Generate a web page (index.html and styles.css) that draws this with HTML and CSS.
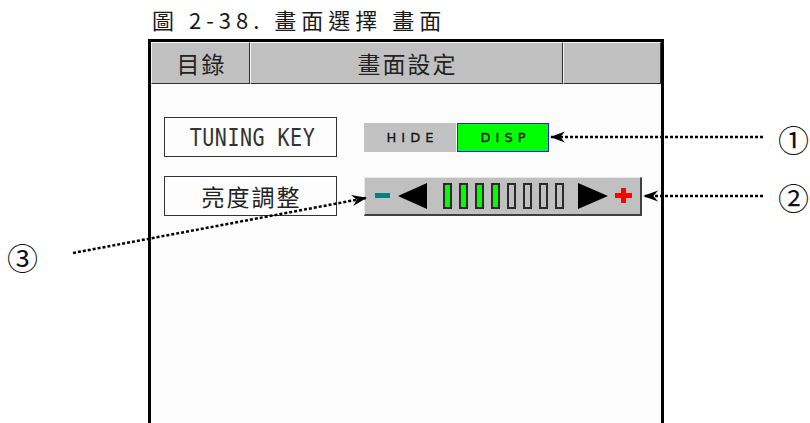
FILE: index.html
```html
<!DOCTYPE html>
<html lang="zh-Hant">
<head>
<meta charset="UTF-8">
<meta name="viewport" content="width=device-width, initial-scale=1.0">
<title>畫面選擇</title>
<link rel="stylesheet" href="styles.css">
</head>
<body>

<div class="page">
    <div class="caption">圖 2-38. 畫面選擇 畫面</div>

    <div class="screen">
        <div class="header">
            <div class="cell cell-menu">目錄</div>
            <div class="cell cell-title">畫面設定</div>
            <div class="cell cell-empty"></div>
        </div>

        <div class="content">
            <div class="row">
                <div class="label"><span class="latin">TUNING KEY</span></div>
                <div class="toggle">
                    <div class="opt">HIDE</div>
                    <div class="opt on">DISP</div>
                </div>
            </div>
            <div class="row">
                <div class="label">亮度調整</div>
                <div class="slider">
                    <span class="minus"></span>
                    <span class="tri tri-left"></span>
                    <div class="bars">
                        <span class="bar lit"></span>
                        <span class="bar lit"></span>
                        <span class="bar lit"></span>
                        <span class="bar lit"></span>
                        <span class="bar"></span>
                        <span class="bar"></span>
                        <span class="bar"></span>
                        <span class="bar"></span>
                    </div>
                    <span class="tri tri-right"></span>
                    <svg class="plus" width="17" height="15" viewBox="0 0 17 15">
                        <rect x="0" y="5" width="17" height="5" fill="#ff0000"/>
                        <rect x="6" y="0" width="5" height="15" fill="#ff0000"/>
                    </svg>
                </div>
            </div>
        </div>
    </div>

    <!-- callout lines drawn over the screen -->
    <svg class="callouts" width="810" height="423" viewBox="0 0 810 423">
        <defs>
            <marker id="head" markerUnits="userSpaceOnUse" viewBox="0 0 16 12"
                    refX="15" refY="6" markerWidth="15" markerHeight="13" orient="auto">
                <path d="M0,0 L16,6 L0,12 L5,6 Z" fill="#000"/>
            </marker>
        </defs>
        <line class="dots" x1="763" y1="137" x2="551" y2="137" marker-end="url(#head)"/>
        <line class="dots" x1="763" y1="196" x2="644" y2="196" marker-end="url(#head)"/>
        <line class="dots" x1="73" y1="253" x2="366" y2="198" marker-end="url(#head)"/>
    </svg>
    <span class="num num-1">①</span>
    <span class="num num-2">②</span>
    <span class="num num-3">③</span>
</div>

</body>
</html>
```

FILE: styles.css
```css
body {
    margin: 0;
    background: #fff;
    font-family: "Noto Sans CJK TC", "Noto Sans", sans-serif;
    color: #222;
}
.page {
    position: relative;
    width: 810px;
    height: 423px;
    overflow: hidden;
    padding-left: 148px;
    box-sizing: border-box;
}
.caption {
    height: 39px;
    line-height: 38px;
    padding-left: 4px;
    font-size: 22px;
    letter-spacing: 5px;
    color: #1a1a1a;
    white-space: nowrap;
}

/* device screen */
.screen {
    width: 516px;
    height: 420px;
    box-sizing: border-box;
    border: 3px solid #000;
    border-bottom: none;
    background: #fcfcfc;
}
.header {
    display: flex;
    height: 42px;
}
.cell {
    box-sizing: border-box;
    background: #c0c0c0;
    border: 1px solid;
    border-color: #f4f4f4 #303030 #303030 #f4f4f4;
    display: flex;
    align-items: center;
    justify-content: center;
    font-size: 23px;
    letter-spacing: 2px;
    padding-left: 2px;
}
.cell-menu { width: 99px; }
.cell-title { width: 313px; }
.cell-empty { width: 98px; }

.content {
    padding: 33px 0 0 13px;
    display: flex;
    flex-direction: column;
    gap: 19px;
}
.row {
    display: flex;
    align-items: center;
    gap: 27px;
}
.label {
    width: 173px;
    height: 40px;
    box-sizing: border-box;
    border: 1px solid #333;
    display: flex;
    align-items: center;
    justify-content: center;
    font-size: 23px;
    letter-spacing: 2px;
    padding-left: 2px;
    background: #fdfdfd;
}
.label .latin {
    display: inline-block;
    font-family: "DejaVu Sans Mono", monospace;
    font-size: 20px;
    letter-spacing: 0.5px;
    transform: scaleY(1.25);
    padding-left: 2px;
    color: #333;
}

/* HIDE / DISP switch */
.toggle {
    display: flex;
    height: 29px;
}
.opt {
    width: 92px;
    box-sizing: border-box;
    background: #c2c2c2;
    display: flex;
    align-items: center;
    justify-content: center;
    font-family: "DejaVu Sans", sans-serif;
    font-size: 13px;
    letter-spacing: 5px;
    padding-left: 5px;
    color: #111;
    -webkit-text-stroke: 0.3px #111;
}
.opt.on {
    width: 92px;
    margin-left: 1px;
    background: #00ff00;
    border: 1px solid #2020ff;
}

/* brightness slider */
.slider {
    width: 278px;
    height: 39px;
    box-sizing: border-box;
    background: #c0c0c0;
    border: 1px solid;
    border-width: 1px 2px 2px 1px;
    border-color: #e6e6e6 #404040 #404040 #e6e6e6;
    display: flex;
    align-items: center;
    padding-left: 10px;
}
.minus {
    width: 15px;
    height: 5px;
    background: #008080;
    margin-right: 8px;
}
.tri {
    width: 0;
    height: 0;
    border-top: 13px solid transparent;
    border-bottom: 13px solid transparent;
}
.tri-left {
    border-right: 29px solid #000;
    margin-right: 16px;
}
.tri-right {
    border-left: 30px solid #000;
    margin-left: 14px;
    margin-right: 7px;
}
.bars {
    display: flex;
    gap: 7px;
}
.bar {
    width: 9px;
    height: 26px;
    box-sizing: border-box;
    border: 2px solid #2a2a2a;
}
.bar.lit {
    background: #00ff00;
}

/* callouts */
.callouts {
    position: absolute;
    left: 0;
    top: 0;
    pointer-events: none;
}
.dots {
    stroke: #000;
    stroke-width: 2.5;
    stroke-dasharray: 3 2;
}
.num {
    position: absolute;
    font-size: 31px;
    line-height: 30px;
    color: #111;
}
.num-1 { left: 778px; top: 124px; }
.num-2 { left: 778px; top: 182px; }
.num-3 { left: 7px; top: 242px; }
```
